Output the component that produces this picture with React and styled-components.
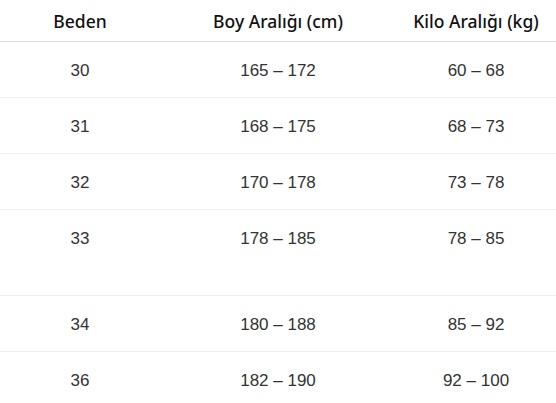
import React from 'react';
import styled, { createGlobalStyle } from 'styled-components';

const GlobalStyle = createGlobalStyle`
    html, body {
        margin: 0;
        padding: 0;
        background: #ffffff;
    }
`;

const Table = styled.div`
    width: 556px;
    display: grid;
    grid-template-columns: 160px 236px 160px;
    font-family: "Liberation Sans", Arial, sans-serif;
`;

const HeadCell = styled.div`
    height: 41px;
    display: flex;
    align-items: center;
    justify-content: center;
    border-bottom: 1px solid #dcdcdc;
    font-family: "Noto Sans", "Open Sans", sans-serif;
    font-weight: 500;
    font-size: 17.5px;
    color: #111;
`;

const Cell = styled.div`
    height: ${(p) => p.$height}px;
    box-sizing: border-box;
    padding-top: 19px;
    text-align: center;
    font-size: 17px;
    line-height: 20px;
    color: #333;
    border-bottom: 1px solid #f0f0f0;
`;

const rows = [
    { size: '30', height: '165 – 172', weight: '60 – 68' },
    { size: '31', height: '168 – 175', weight: '68 – 73' },
    { size: '32', height: '170 – 178', weight: '73 – 78' },
    { size: '33', height: '178 – 185', weight: '78 – 85', tall: true },
    { size: '34', height: '180 – 188', weight: '85 – 92' },
    { size: '36', height: '182 – 190', weight: '92 – 100' },
];

export default function App() {
    return (
        <>
            <GlobalStyle />
            <Table>
                <HeadCell>Beden</HeadCell>
                <HeadCell>Boy Aralığı (cm)</HeadCell>
                <HeadCell>Kilo Aralığı (kg)</HeadCell>
                {rows.map((r) => {
                    const h = r.tall ? 86 : 56;
                    return (
                        <React.Fragment key={r.size}>
                            <Cell $height={h}>{r.size}</Cell>
                            <Cell $height={h}>{r.height}</Cell>
                            <Cell $height={h}>{r.weight}</Cell>
                        </React.Fragment>
                    );
                })}
            </Table>
        </>
    );
}
